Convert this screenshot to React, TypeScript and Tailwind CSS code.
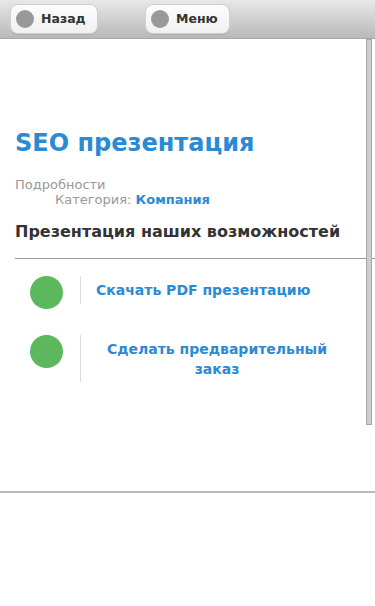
import React from "react"

const font = { fontFamily: '"DejaVu Sans", Verdana, sans-serif' }

function HeaderButton({ label, width }: { label: string; width: string }) {
  return (
    <button
      className={`flex h-[30px] ${width} items-center gap-[7px] rounded-[8px] border border-[#cfcfcf] bg-gradient-to-b from-[#fdfdfd] to-[#f0f0f0] pl-[5px] shadow-[0_1px_0_rgba(0,0,0,0.08)]`}
    >
      <span className="h-[18px] w-[18px] rounded-full bg-[#999999]" />
      <span className="text-[12.5px] font-bold text-[#333333]">{label}</span>
    </button>
  )
}

function Action({ children, center }: { children: React.ReactNode; center?: boolean }) {
  return (
    <div className="flex items-start">
      <div className="ml-[30px] h-[33px] w-[33px] shrink-0 rounded-full bg-[#5cb85c]" />
      <div className="ml-[17px] flex min-h-[28px] flex-1 border-l border-[#dddddd]">
        <div
          className={
            center
              ? "w-[272px] pb-[3px] pt-[4px] text-center text-[14px] font-bold leading-[20px] text-[#2a8ad4]"
              : "pl-[15px] pt-[4px] text-[14px] font-bold leading-[20px] text-[#2a8ad4]"
          }
        >
          {children}
        </div>
      </div>
    </div>
  )
}

export default function App() {
  return (
    <div className="h-[606px] w-[375px] overflow-hidden bg-white" style={font}>
      <header className="flex h-[39px] items-start gap-[47px] border-b border-[#a8a8a8] bg-gradient-to-b from-[#e8e8e8] to-[#b9b9b9] px-[10px] pt-[4px]">
        <HeaderButton label="Назад" width="w-[88px]" />
        <HeaderButton label="Меню" width="w-[85px]" />
      </header>

      <div className="relative h-[454px] border-b-2 border-[#b8b8b8]">
        <div className="absolute right-[3px] top-0 h-[386px] w-[6px] border border-[#aaaaaa] bg-[#cccccc]" />

        <div className="pt-[88px]">
          <h1 className="px-[15px] text-[24px] font-bold leading-[32px] text-[#2a8ad4]">SEO презентация</h1>

          <div className="mt-[18px] px-[15px] text-[13px] leading-[15px] text-[#999999]">
            <div>Подробности</div>
            <div className="pl-[40px]">
              Категория: <span className="font-bold text-[#2a8ad4]">Компания</span>
            </div>
          </div>

          <h2 className="mt-[15px] px-[15px] text-[16px] font-bold leading-[20px] text-[#333333]">
            Презентация наших возможностей
          </h2>

          <div className="ml-[15px] mt-[16px] border-t border-[#999999]" />

          <div className="mt-[17px] flex flex-col gap-[26px]">
            <Action>Скачать PDF презентацию</Action>
            <Action center>
              Сделать предварительный
              <br />
              заказ
            </Action>
          </div>
        </div>
      </div>
    </div>
  )
}
